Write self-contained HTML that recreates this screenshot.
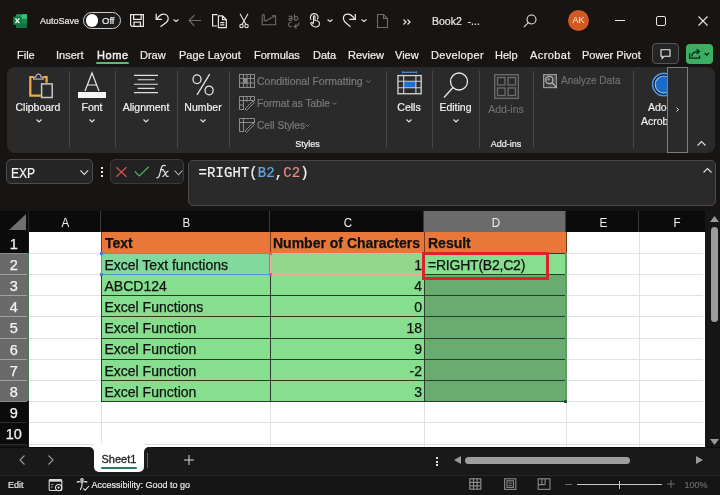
<!DOCTYPE html>
<html><head><meta charset="utf-8">
<style>
*{margin:0;padding:0;box-sizing:border-box}
body{will-change:transform}
html,body{width:720px;height:495px;overflow:hidden;background:#171412;font-family:"Liberation Sans",sans-serif;color:#fff}
.a{position:absolute}
.t{position:absolute;white-space:nowrap;line-height:1;-webkit-text-stroke-width:0.2px}
svg{position:absolute;overflow:visible}
.vl{position:absolute;width:1px;background:#474747}
.grp{position:absolute;-webkit-text-stroke-width:0.2px;font-size:10.5px;color:#f2f2f2;white-space:nowrap;line-height:1;text-align:center}
.dim{color:#7a7a7a}
.ch{position:absolute}
.ct{font-size:14px;color:#111;-webkit-text-stroke:0.25px #111}
.hd{-webkit-text-stroke-width:0}
</style></head><body>

<!-- ===== TITLE BAR ===== -->
<div id="title">
  <!-- Excel logo -->
  <svg style="left:13px;top:13.5px" width="15" height="14" viewBox="0 0 15 14">
    <rect x="3" y="0.3" width="11" height="13.4" rx="1" fill="#1e9e5e"/>
    <rect x="8.5" y="0.3" width="5.5" height="4.5" rx="0.8" fill="#33c481"/>
    <rect x="3" y="4.8" width="11" height="4.5" fill="#168a4e"/>
    <rect x="3" y="9.3" width="11" height="4.4" rx="1" fill="#15703f"/>
    <rect x="0.1" y="2.5" width="8.6" height="8.6" rx="1" fill="#117a42"/>
    <path d="M2.4 4.4 L6.4 9.2 M6.4 4.4 L2.4 9.2" stroke="#f4fff8" stroke-width="1.3"/>
  </svg>
  <div class="t" style="left:40px;top:17px;font-size:9px;color:#e8e8e8">AutoSave</div>
  <!-- toggle -->
  <div class="a" style="left:83px;top:12px;width:38px;height:17px;border:1.3px solid #cfcfcf;border-radius:9px;background:#1c1c1c"></div>
  <div class="a" style="left:85.5px;top:14px;width:12.5px;height:12.5px;border-radius:50%;background:#fff"></div>
  <div class="t" style="left:102px;top:15.8px;font-size:9.5px;color:#f0f0f0">Off</div>
  <!-- save -->
  <svg style="left:130px;top:14px" width="14" height="13" viewBox="0 0 14 13" fill="none" stroke="#e8e8e8" stroke-width="1.2">
    <path d="M0.6 0.6 H13.4 V12.4 H2 L0.6 11 Z"/>
    <path d="M3.6 0.6 V5.4 H11.2 V0.6"/>
    <path d="M4 12.4 V8.2 H10.4 V12.4"/>
  </svg>
  <!-- undo -->
  <svg style="left:150px;top:10px" width="20" height="20" viewBox="0 0 20 20" fill="none" stroke="#ececec" stroke-width="1.25">
    <path d="M6.2 3.8 V9.3 H11.8"/>
    <path d="M6.8 9 C9 5.5 11.5 4 13.8 4 C16.3 4 18.2 6 18.2 8.5 C18.2 10.2 17.5 11.3 16.5 12.3 L10.5 16.8"/>
  </svg>
  <svg style="left:173px;top:19px" width="6" height="3" viewBox="0 0 6 3" fill="none" stroke="#e0e0e0" stroke-width="1.2"><path d="M0.5 0.5 L3 2.5 L5.5 0.5"/></svg>
  <!-- back arrow -->
  <svg style="left:188px;top:14px" width="14" height="13" viewBox="0 0 14 13" fill="none" stroke="#6a6a6a" stroke-width="1.1">
    <path d="M13 6.5 H1 M6.5 1 L1 6.5 L6.5 12"/>
  </svg>
  <!-- copy -->
  <svg style="left:208px;top:10px" width="22" height="20" viewBox="0 0 22 20" fill="none" stroke="#e8e8e8" stroke-width="1.2">
    <path d="M9.5 4.6 H4.6 V16 H9"/>
    <path d="M10.4 5.8 H14.5 L18.3 9.6 V17.6 H10.4 Z M14.5 5.8 V9.6 H18.3"/>
    <path d="M12.3 12.6 H16.3 M12.3 14.8 H16.3"/>
  </svg>
  <!-- scissors -->
  <svg style="left:236px;top:10px" width="16" height="20" viewBox="0 0 16 20" fill="none" stroke="#e8e8e8" stroke-width="1.1">
    <path d="M4 3.7 L9.8 14.3 M12 3.7 L6.2 14.3"/>
    <circle cx="5.5" cy="16" r="1.7"/><circle cx="10.5" cy="16" r="1.7"/>
  </svg>
  <!-- sign icon (disabled) -->
  <svg style="left:258px;top:10px" width="20" height="18" viewBox="0 0 20 18" fill="none" stroke="#6e6e6e" stroke-width="1.1">
    <path d="M4.2 10 V14.7 H17.6 V5.8 H14"/>
    <path d="M7 11.2 L17.4 5.8"/>
    <path d="M4.5 11 C3.8 8 4 5 5.2 4.6 C6.2 4.3 6.5 6 6.2 8.5 C6 10 6.5 11 7.5 10.5"/>
  </svg>
  <!-- spelling icon (disabled) -->
  <svg style="left:286px;top:10px" width="16" height="20" viewBox="0 0 16 20" fill="none" stroke="#6e6e6e" stroke-width="1.1">
    <path d="M3 7 C3 5.8 6 5.8 6 7 V10.5 M6 8.5 C4.5 8.2 2.8 8.6 2.8 9.6 C2.8 10.8 5 10.8 6 9.6"/>
    <path d="M8.5 4.3 V10.5 M8.5 7.8 C9 6 12 6 12 8.2 C12 10.8 9 10.8 8.5 9"/>
    <path d="M5.5 12.5 C4 11.8 2.5 12.8 2.5 14.5 C2.5 16.5 4.5 17 5.5 16.3"/>
    <path d="M12.8 12.5 C13.5 15 11.5 16.5 8.5 16.5 M10.5 14.5 L8.3 16.5 L10.5 18.5"/>
  </svg>
  <!-- touch icon -->
  <svg style="left:305px;top:10px" width="20" height="20" viewBox="0 0 20 20" fill="none" stroke="#e8e8e8" stroke-width="1.1">
    <path d="M6.2 10 C4.5 8 5.5 3.6 9.3 3.6 C13 3.6 14 7.5 12.2 9.5"/>
    <path d="M8.5 13 V6.6 C8.5 5.6 10 5.6 10 6.6 V10.5 C12.5 10.5 14.5 11 14.5 13.5 C14.5 16 12.5 17 10.5 17 C8.5 17 7 15.5 5.8 13.5 C5.5 12.8 6.5 12.3 7.2 12.8 L8.5 14"/>
  </svg>
  <svg style="left:327px;top:19px" width="6" height="3" viewBox="0 0 6 3" fill="none" stroke="#e0e0e0" stroke-width="1.2"><path d="M0.5 0.5 L3 2.5 L5.5 0.5"/></svg>
  <!-- redo -->
  <svg style="left:338px;top:10px" width="20" height="20" viewBox="0 0 20 20" fill="none" stroke="#ececec" stroke-width="1.25">
    <path d="M17.3 4 V9.4 H11.25"/>
    <path d="M16.7 9 C14.5 5.5 12 4 9.6 4 C7.2 4 5.4 6 5.4 8.3 C5.4 10 6.3 11.2 7 12 L12.5 16.9"/>
  </svg>
  <svg style="left:361px;top:19px" width="6" height="3" viewBox="0 0 6 3" fill="none" stroke="#e0e0e0" stroke-width="1.2"><path d="M0.5 0.5 L3 2.5 L5.5 0.5"/></svg>
  <!-- doc (disabled) -->
  <svg style="left:377px;top:14px" width="11" height="14" viewBox="0 0 11 14" fill="none" stroke="#6e6e6e" stroke-width="1.1">
    <path d="M0.5 0.5 H6.5 L10.5 4.5 V13.5 H0.5 Z M6.5 0.5 V4.5 H10.5"/>
  </svg>
  <!-- >> -->
  <svg style="left:403px;top:19px" width="8" height="6" viewBox="0 0 8 6" fill="none" stroke="#e8e8e8" stroke-width="1.2">
    <path d="M0.5 0.5 L3 3 L0.5 5.5 M4.5 0.5 L7 3 L4.5 5.5"/>
  </svg>
  <div class="t" style="left:432px;top:16px;font-size:10.5px;color:#e8e8e8">Book2&nbsp;&nbsp;-...</div>
  <!-- search -->
  <svg style="left:523px;top:14px" width="14" height="14" viewBox="0 0 14 14" fill="none" stroke="#e6e6e6" stroke-width="1.1">
    <circle cx="8.5" cy="5.5" r="4.5"/><path d="M5.3 8.7 L0.8 13.2"/>
  </svg>
  <!-- avatar -->
  <div class="a" style="left:568px;top:10px;width:21px;height:21px;border-radius:50%;background:#d05a22"></div>
  <div class="t" style="left:568px;top:16px;width:21px;text-align:center;font-size:9px;color:#f8f0ea;-webkit-text-stroke-width:0">AK</div>
  <!-- window controls -->
  <div class="a" style="left:615px;top:19.7px;width:9.5px;height:1.4px;background:#e6e6e6"></div>
  <div class="a" style="left:656px;top:16px;width:9.5px;height:9.5px;border:1.2px solid #e6e6e6;border-radius:2px"></div>
  <svg style="left:698px;top:16px" width="10" height="10" viewBox="0 0 10 10" fill="none" stroke="#e6e6e6" stroke-width="1.1"><path d="M0.5 0.5 L9.5 9.5 M9.5 0.5 L0.5 9.5"/></svg>
</div>

<!-- ===== TABS ===== -->
<div id="tabs" style="font-size:11px;color:#f0f0f0">
  <div class="t" style="left:17px;top:50px">File</div>
  <div class="t" style="left:56px;top:50px">Insert</div>
  <div class="t" style="left:97px;top:50px;-webkit-text-stroke-width:0.45px;letter-spacing:0.6px">Home</div>
  <div class="a" style="left:96px;top:62px;width:33px;height:2px;background:#5dbb7a;border-radius:1px"></div>
  <div class="t" style="left:140px;top:50px">Draw</div>
  <div class="t" style="left:179px;top:50px">Page Layout</div>
  <div class="t" style="left:254px;top:50px">Formulas</div>
  <div class="t" style="left:313px;top:50px">Data</div>
  <div class="t" style="left:348px;top:50px">Review</div>
  <div class="t" style="left:395px;top:50px">View</div>
  <div class="t" style="left:431px;top:50px;letter-spacing:0.3px">Developer</div>
  <div class="t" style="left:495px;top:50px">Help</div>
  <div class="t" style="left:530px;top:50px;letter-spacing:0.4px">Acrobat</div>
  <div class="t" style="left:582px;top:50px">Power Pivot</div>
  <!-- comment btn -->
  <div class="a" style="left:652px;top:43px;width:27px;height:20.5px;border:1px solid #565656;border-radius:4px;background:#242424"></div>
  <svg style="left:660px;top:48.5px" width="11" height="10" viewBox="0 0 11 10" fill="none" stroke="#f0f0f0" stroke-width="1.1"><path d="M1 0.7 H10 V7.2 H4.2 L2.2 9.3 V7.2 H1 Z"/></svg>
  <!-- share btn -->
  <div class="a" style="left:685.5px;top:43.5px;width:27px;height:20px;border-radius:4px;background:#3daf63"></div>
  <svg style="left:686px;top:44px" width="27" height="20" viewBox="0 0 27 20" fill="none" stroke="#0e2415" stroke-width="1.3">
    <path d="M3.6 9.2 V14.2 H13.6 V11.6"/>
    <path d="M5.8 12.6 C5.8 9.2 8.3 7.6 12.6 7.6"/>
    <path d="M10.6 5.2 L13.4 7.6 L10.6 10"/>
    <path d="M18.6 9 L20.8 11 L23 9"/>
  </svg>
</div>

<!-- ===== RIBBON ===== -->
<div id="ribbon" class="a" style="left:7px;top:67px;width:708px;height:86px;background:#2a2a2a;border-radius:8px"></div>
<!-- dividers -->
<div class="vl" style="left:69px;top:71px;height:77px"></div>
<div class="vl" style="left:115px;top:71px;height:77px"></div>
<div class="vl" style="left:177px;top:71px;height:77px"></div>
<div class="vl" style="left:229px;top:71px;height:77px"></div>
<div class="vl" style="left:386px;top:71px;height:77px"></div>
<div class="vl" style="left:432px;top:71px;height:77px"></div>
<div class="vl" style="left:479px;top:71px;height:77px"></div>
<div class="vl" style="left:533px;top:71px;height:77px"></div>
<div class="vl" style="left:633px;top:71px;height:77px"></div>
<!-- clipboard icon -->
<svg style="left:24px;top:68px" width="34" height="34" viewBox="0 0 34 34" fill="none">
  <path d="M9.5 9 H6.3 V27.7 H16.8" stroke="#eeae42" stroke-width="2.2"/>
  <path d="M19.5 9 H22.6 V14.8" stroke="#eeae42" stroke-width="2.2"/>
  <path d="M9.6 11.2 V9.2 H11.8 C11.8 5.2 17 5.2 17 9.2 H19.2 V11.2 Z" stroke="#b4b4b4" stroke-width="1.2" fill="#2a2a2a"/>
  <rect x="17.6" y="15.9" width="10.6" height="13.6" stroke="#c8c8c8" stroke-width="1.5" fill="#2a2a2a"/>
</svg>
<div class="grp" style="left:7px;top:102.4px;width:62px">Clipboard</div>
<svg style="left:36px;top:118.5px" width="6" height="4" viewBox="0 0 6 4" fill="none" stroke="#e0e0e0" stroke-width="1.2"><path d="M0.5 0.5 L3 3 L5.5 0.5"/></svg>
<!-- font icon -->
<svg style="left:77px;top:72px" width="30" height="27" viewBox="0 0 30 27" fill="none">
  <path d="M8 19 L15 1 L22 19 M10.5 13 H19.5" stroke="#e8e8e8" stroke-width="1.2"/>
  <rect x="1" y="20" width="28" height="6" fill="#f5f5f5"/>
</svg>
<div class="grp" style="left:69px;top:102.4px;width:46px">Font</div>
<svg style="left:89px;top:118.5px" width="6" height="4" viewBox="0 0 6 4" fill="none" stroke="#e0e0e0" stroke-width="1.2"><path d="M0.5 0.5 L3 3 L5.5 0.5"/></svg>
<!-- alignment icon -->
<svg style="left:133px;top:74px" width="26" height="20" viewBox="0 0 26 20" fill="none" stroke="#e0e0e0" stroke-width="1.15">
  <path d="M1 1.4 H25 M4.6 5.75 H21.8 M1 10.2 H25 M4.6 14.4 H21.8 M1 18.6 H25"/>
</svg>
<div class="grp" style="left:115px;top:102.4px;width:62px">Alignment</div>
<svg style="left:143px;top:118.5px" width="6" height="4" viewBox="0 0 6 4" fill="none" stroke="#e0e0e0" stroke-width="1.2"><path d="M0.5 0.5 L3 3 L5.5 0.5"/></svg>
<!-- number icon -->
<svg style="left:192px;top:74px" width="24" height="22" viewBox="0 0 24 22" fill="none" stroke="#e8e8e8" stroke-width="1.25">
  <ellipse cx="5" cy="5.2" rx="4" ry="4.4"/><ellipse cx="17.1" cy="16.4" rx="4" ry="4.4"/><path d="M17.7 0.2 L5 20.8"/>
</svg>
<div class="grp" style="left:177px;top:102.4px;width:52px">Number</div>
<svg style="left:200px;top:118.5px" width="6" height="4" viewBox="0 0 6 4" fill="none" stroke="#e0e0e0" stroke-width="1.2"><path d="M0.5 0.5 L3 3 L5.5 0.5"/></svg>
<!-- styles -->
<svg style="left:239px;top:74px" width="16" height="14" viewBox="0 0 16 14" fill="none" stroke="#8a8a8a" stroke-width="1">
  <rect x="0.5" y="0.5" width="15" height="13"/><path d="M0.5 4.5 H15.5 M0.5 9 H15.5 M4.5 0.5 V13.5 M8 0.5 V13.5 M11.5 0.5 V13.5"/>
  <rect x="4.5" y="4.5" width="3.5" height="4.5" fill="#8a8a8a"/>
</svg>
<div class="t dim" style="left:257px;top:76px;font-size:10.5px">Conditional Formatting</div>
<svg style="left:366px;top:79.5px" width="5" height="3" viewBox="0 0 5 3" fill="none" stroke="#7a7a7a" stroke-width="1"><path d="M0.5 0.5 L2.5 2.5 L4.5 0.5"/></svg>
<svg style="left:239px;top:96px" width="16" height="14" viewBox="0 0 16 14" fill="none" stroke="#8a8a8a" stroke-width="1">
  <path d="M15.5 5 V0.5 H0.5 V13.5 H5 M0.5 4.5 H15.5 M4.5 0.5 V13.5 M8 0.5 V6 M11.5 0.5 V4.5 M0.5 9 H5"/>
  <path d="M6 13 L14 5 L15.5 6.5 L7.5 14.5 Z"/>
</svg>
<div class="t dim" style="left:257px;top:99.2px;font-size:10.2px">Format as Table</div>
<svg style="left:332px;top:101.5px" width="5" height="3" viewBox="0 0 5 3" fill="none" stroke="#7a7a7a" stroke-width="1"><path d="M0.5 0.5 L2.5 2.5 L4.5 0.5"/></svg>
<svg style="left:239px;top:118px" width="16" height="14" viewBox="0 0 16 14" fill="none" stroke="#8a8a8a" stroke-width="1">
  <path d="M15.5 5 V0.5 H0.5 V13.5 H5 M0.5 4.5 H15.5 M4.5 0.5 V13.5"/>
  <path d="M6 13 L14 5 L15.5 6.5 L7.5 14.5 Z"/>
</svg>
<div class="t dim" style="left:257px;top:121.4px;font-size:10.2px">Cell Styles</div>
<svg style="left:305px;top:123.5px" width="5" height="3" viewBox="0 0 5 3" fill="none" stroke="#7a7a7a" stroke-width="1"><path d="M0.5 0.5 L2.5 2.5 L4.5 0.5"/></svg>
<div class="grp" style="left:229px;top:140px;width:157px;font-size:9px">Styles</div>
<!-- cells icon -->
<svg style="left:397px;top:71px" width="26" height="24" viewBox="0 0 26 24" fill="none">
  <path d="M5.6 1.3 H19.4" stroke="#4a8fd6" stroke-width="1.2"/>
  <path d="M5.6 0.2 V2.4 M19.4 0.2 V2.4" stroke="#4a8fd6" stroke-width="1"/>
  <rect x="6.7" y="10.3" width="12.2" height="6.5" fill="#1d6fd0"/>
  <rect x="0.95" y="4.55" width="23.2" height="18.2" stroke="#d8d8d8" stroke-width="1.3"/>
  <path d="M0.95 10.3 H24.15 M0.95 16.8 H24.15 M6.7 4.55 V22.75 M18.9 4.55 V22.75" stroke="#cfcfcf" stroke-width="1.1"/>
</svg>
<div class="grp" style="left:386px;top:102.4px;width:46px">Cells</div>
<svg style="left:406px;top:118.5px" width="6" height="4" viewBox="0 0 6 4" fill="none" stroke="#e0e0e0" stroke-width="1.2"><path d="M0.5 0.5 L3 3 L5.5 0.5"/></svg>
<!-- editing icon -->
<svg style="left:443px;top:72px" width="26" height="27" viewBox="0 0 26 27" fill="none" stroke="#e8e8e8" stroke-width="1.3">
  <circle cx="16" cy="9.5" r="8.5"/><path d="M10 15.5 L1 25.5"/>
</svg>
<div class="grp" style="left:432px;top:102.4px;width:47px">Editing</div>
<svg style="left:452.5px;top:118.5px" width="6" height="4" viewBox="0 0 6 4" fill="none" stroke="#e0e0e0" stroke-width="1.2"><path d="M0.5 0.5 L3 3 L5.5 0.5"/></svg>
<!-- add-ins -->
<svg style="left:494px;top:74px" width="25" height="25" viewBox="0 0 25 25" fill="none" stroke="#6e6e6e" stroke-width="1.3">
  <rect x="0.7" y="0.7" width="23.6" height="23.6"/>
  <rect x="3.5" y="3.5" width="7.5" height="7.5"/><rect x="14" y="3.5" width="7.5" height="7.5"/>
  <rect x="3.5" y="14" width="7.5" height="7.5"/><rect x="14" y="14" width="7.5" height="7.5"/>
</svg>
<div class="grp dim" style="left:479px;top:104px;width:54px;color:#6e6e6e">Add-ins</div>
<div class="grp" style="left:479px;top:140px;width:54px;font-size:9px">Add-ins</div>
<!-- analyze data -->
<svg style="left:543px;top:74px" width="15" height="15" viewBox="0 0 15 15" fill="none">
  <rect x="0.6" y="0.6" width="12.8" height="13" fill="#4a4a4a" stroke="#9a9a9a" stroke-width="1.2"/>
  <path d="M2.5 13 V9.5 M4.5 13 V10.5 M10 13 V9 M12 13 V10" stroke="#2a2a2a" stroke-width="1.2"/>
  <circle cx="6.3" cy="6" r="3.6" fill="#3a3a3a" stroke="#b8b8b8" stroke-width="1.2"/>
  <circle cx="5.6" cy="5.3" r="1.4" fill="#8a8a8a"/>
  <path d="M8.8 8.5 L13.8 13.8" stroke="#b8b8b8" stroke-width="1.3"/>
</svg>
<div class="t dim" style="left:561px;top:76px;font-size:10px;color:#707070">Analyze Data</div>
<!-- adobe -->
<svg style="left:650px;top:71px" width="28" height="28" viewBox="0 0 28 28">
  <circle cx="13.8" cy="13.6" r="11.2" fill="#0b1626" stroke="#4d93dc" stroke-width="1.6"/>
  <circle cx="13.8" cy="13.6" r="8.6" fill="#1b6cc8" stroke="#8cc0f0" stroke-width="1.2"/>
</svg>
<div class="t" style="left:648px;top:102px;font-size:10.5px;color:#f0f0f0">Ado</div>
<div class="t" style="left:641px;top:116px;font-size:10.5px;color:#f0f0f0">Acrob</div>
<div class="a" style="left:667px;top:67px;width:21px;height:86px;border:1px solid #7e7e7e;background:#2a2a2a"></div>
<svg style="left:676px;top:107px" width="3" height="5" viewBox="0 0 3 5" fill="none" stroke="#e0e0e0" stroke-width="1"><path d="M0.5 0.5 L2.5 2.5 L0.5 4.5"/></svg>
<svg style="left:697px;top:141px" width="9" height="5" viewBox="0 0 9 5" fill="none" stroke="#e0e0e0" stroke-width="1.1"><path d="M0.5 4.5 L4.5 0.5 L8.5 4.5"/></svg>

<!-- ===== FORMULA BAR ===== -->
<div id="fbar">
<div class="a" style="left:6px;top:159px;width:87px;height:25px;border:1px solid #4c4c4c;border-radius:5px;background:#262626"></div>
<div class="t" style="left:11px;top:165.5px;font-size:14px;color:#f5f5f5;transform:scaleX(0.86);transform-origin:left top">EXP</div>
<svg style="left:80px;top:169.8px" width="9" height="5" viewBox="0 0 9 5" fill="none" stroke="#e0e0e0" stroke-width="1.1"><path d="M0.4 0.4 L4.3 4.4 L8.2 0.4"/></svg>
<div class="a" style="left:101px;top:167px;width:2px;height:2px;background:#e8e8e8"></div>
<div class="a" style="left:101px;top:171px;width:2px;height:2px;background:#e8e8e8"></div>
<div class="a" style="left:101px;top:175px;width:2px;height:2px;background:#e8e8e8"></div>
<div class="a" style="left:110px;top:159px;width:74px;height:25px;border:1px solid #3a3a3a;border-radius:5px;background:#222"></div>
<svg style="left:116px;top:167px" width="11" height="10" viewBox="0 0 11 10" fill="none" stroke="#d65350" stroke-width="1.2"><path d="M0.3 0.2 L10.5 9.8 M10.5 0.2 L0.3 9.8"/></svg>
<svg style="left:134px;top:166px" width="15" height="11" viewBox="0 0 15 11" fill="none" stroke="#4bb36b" stroke-width="1.2"><path d="M0.8 5.5 L5.3 10 L14.8 0.8"/></svg>
<svg style="left:150px;top:160px" width="22" height="22" viewBox="0 0 22 22" fill="none" stroke="#e6e6e6" stroke-width="1.15">
  <path d="M6.2 17.6 C7.5 18.5 8.8 17.5 9.5 15 L11.5 7.5 C12 5.5 13.5 5 15.8 5.8"/>
  <path d="M10.2 9.6 H13.8"/>
  <path d="M12.6 11.2 C13.8 10.6 14.5 11 15 12.5 L16.2 15.5 C16.6 16.5 17.5 16.8 18.5 16"/>
  <path d="M18.6 11 C17.5 11 16.5 12.5 15.5 13.5 L13.8 15.5 C13.2 16.4 12.6 16.6 12.2 16.2"/>
</svg>
<svg style="left:173.5px;top:169.5px" width="9" height="6" viewBox="0 0 9 6" fill="none" stroke="#bdbdbd" stroke-width="1.1"><path d="M0.5 0.5 L4.5 4.8 L8.5 0.5"/></svg>
<div class="a" style="left:188px;top:160px;width:527.5px;height:46px;border:1px solid #4a4a4a;border-radius:5px;background:#2a2a2a"></div>
<div class="t" style="left:198.5px;top:166px;letter-spacing:0.07px;font-family:'Liberation Mono',monospace;font-size:14px;color:#f2f2f2">=RIGHT(<span style="color:#65a9e8">B2</span>,<span style="color:#e98a86">C2</span>)</div>
<svg style="left:703px;top:168px" width="9" height="5" viewBox="0 0 9 5" fill="none" stroke="#e0e0e0" stroke-width="1.1"><path d="M0.5 4.5 L4.5 0.5 L8.5 4.5"/></svg>
</div>

<!-- ===== GRID ===== -->
<div id="grid">
<div class="a" style="left:0;top:211px;width:720px;height:236px;background:#161616"></div>
<div class="a" style="left:29px;top:232px;width:676px;height:215px;background:#fff"></div>
<div class="a" style="left:0;top:211px;width:705px;height:21px;background:#0b0b0b"></div>
<div class="a" style="left:424px;top:211px;width:142px;height:21px;background:#6b6b6b"></div>
<div class="a" style="left:100px;top:211px;width:1px;height:21px;background:#3a3a3a"></div>
<div class="a" style="left:269px;top:211px;width:1px;height:21px;background:#3a3a3a"></div>
<div class="a" style="left:423px;top:211px;width:1px;height:21px;background:#3a3a3a"></div>
<div class="a" style="left:565px;top:211px;width:1px;height:21px;background:#3a3a3a"></div>
<div class="a" style="left:638px;top:211px;width:1px;height:21px;background:#3a3a3a"></div>
<div class="a" style="left:28px;top:211px;width:1px;height:21px;background:#2a2a2a"></div>
<svg style="left:9px;top:214px" width="17" height="16" viewBox="0 0 17 16"><path d="M17 0 V16 H0 Z" fill="#6f6f6f"/></svg>
<div class="t hd" style="left:28.8px;top:215.6px;width:73px;text-align:center;font-size:13.5px;color:#f0f0f0;transform:scaleX(0.86)">A</div>
<div class="t hd" style="left:101.8px;top:215.6px;width:169px;text-align:center;font-size:13.5px;color:#f0f0f0;transform:scaleX(0.86)">B</div>
<div class="t hd" style="left:270.8px;top:215.6px;width:154px;text-align:center;font-size:13.5px;color:#f0f0f0;transform:scaleX(0.86)">C</div>
<div class="t hd" style="left:424.8px;top:215.6px;width:142px;text-align:center;font-size:13.5px;color:#f0f0f0;transform:scaleX(0.86)">D</div>
<div class="t hd" style="left:566.8px;top:215.6px;width:73px;text-align:center;font-size:13.5px;color:#f0f0f0;transform:scaleX(0.86)">E</div>
<div class="t hd" style="left:639.8px;top:215.6px;width:74px;text-align:center;font-size:13.5px;color:#f0f0f0;transform:scaleX(0.86)">F</div>
<div class="a" style="left:0;top:232px;width:28px;height:21px;background:#0b0b0b"></div>
<div class="a" style="left:0;top:253px;width:28px;height:21px;background:#6a6a6a"></div>
<div class="a" style="left:0;top:274px;width:28px;height:21px;background:#6a6a6a"></div>
<div class="a" style="left:0;top:295px;width:28px;height:21px;background:#6a6a6a"></div>
<div class="a" style="left:0;top:316px;width:28px;height:22px;background:#6a6a6a"></div>
<div class="a" style="left:0;top:338px;width:28px;height:21px;background:#6a6a6a"></div>
<div class="a" style="left:0;top:359px;width:28px;height:21px;background:#6a6a6a"></div>
<div class="a" style="left:0;top:380px;width:28px;height:21px;background:#6a6a6a"></div>
<div class="a" style="left:0;top:401px;width:28px;height:21px;background:#0b0b0b"></div>
<div class="a" style="left:0;top:422px;width:28px;height:22px;background:#0b0b0b"></div>
<div class="a" style="left:0;top:253px;width:27px;height:1px;background:#8a8a8a"></div>
<div class="a" style="left:0;top:274px;width:27px;height:1px;background:#a0a0a0"></div>
<div class="a" style="left:0;top:295px;width:27px;height:1px;background:#a0a0a0"></div>
<div class="a" style="left:0;top:316px;width:27px;height:1px;background:#a0a0a0"></div>
<div class="a" style="left:0;top:338px;width:27px;height:1px;background:#a0a0a0"></div>
<div class="a" style="left:0;top:359px;width:27px;height:1px;background:#a0a0a0"></div>
<div class="a" style="left:0;top:380px;width:27px;height:1px;background:#a0a0a0"></div>
<div class="a" style="left:0;top:401px;width:27px;height:1px;background:#8a8a8a"></div>
<div class="a" style="left:0;top:422px;width:27px;height:1px;background:#2e2e2e"></div>
<div class="a" style="left:0;top:444px;width:27px;height:1px;background:#2e2e2e"></div>
<div class="t hd" style="left:0;top:236.6px;width:27.5px;text-align:center;font-size:14.5px;color:#f4f4f4;-webkit-text-stroke-width:0.25px">1</div>
<div class="t hd" style="left:0;top:257.8px;width:27.5px;text-align:center;font-size:14.5px;color:#f4f4f4;-webkit-text-stroke-width:0.25px">2</div>
<div class="t hd" style="left:0;top:279.0px;width:27.5px;text-align:center;font-size:14.5px;color:#f4f4f4;-webkit-text-stroke-width:0.25px">3</div>
<div class="t hd" style="left:0;top:300.2px;width:27.5px;text-align:center;font-size:14.5px;color:#f4f4f4;-webkit-text-stroke-width:0.25px">4</div>
<div class="t hd" style="left:0;top:321.4px;width:27.5px;text-align:center;font-size:14.5px;color:#f4f4f4;-webkit-text-stroke-width:0.25px">5</div>
<div class="t hd" style="left:0;top:342.6px;width:27.5px;text-align:center;font-size:14.5px;color:#f4f4f4;-webkit-text-stroke-width:0.25px">6</div>
<div class="t hd" style="left:0;top:363.8px;width:27.5px;text-align:center;font-size:14.5px;color:#f4f4f4;-webkit-text-stroke-width:0.25px">7</div>
<div class="t hd" style="left:0;top:385.0px;width:27.5px;text-align:center;font-size:14.5px;color:#f4f4f4;-webkit-text-stroke-width:0.25px">8</div>
<div class="t hd" style="left:0;top:406.2px;width:27.5px;text-align:center;font-size:14.5px;color:#f4f4f4;-webkit-text-stroke-width:0.25px">9</div>
<div class="t hd" style="left:0;top:427.4px;width:27.5px;text-align:center;font-size:14.5px;color:#f4f4f4;-webkit-text-stroke-width:0.25px">10</div>
<div class="a" style="left:28px;top:253px;width:1px;height:148px;background:#3f7f55"></div>
<div class="a" style="left:29px;top:253px;width:674px;height:1px;background:#e1e1e1"></div>
<div class="a" style="left:29px;top:274px;width:674px;height:1px;background:#e1e1e1"></div>
<div class="a" style="left:29px;top:295px;width:674px;height:1px;background:#e1e1e1"></div>
<div class="a" style="left:29px;top:316px;width:674px;height:1px;background:#e1e1e1"></div>
<div class="a" style="left:29px;top:338px;width:674px;height:1px;background:#e1e1e1"></div>
<div class="a" style="left:29px;top:359px;width:674px;height:1px;background:#e1e1e1"></div>
<div class="a" style="left:29px;top:380px;width:674px;height:1px;background:#e1e1e1"></div>
<div class="a" style="left:29px;top:401px;width:674px;height:1px;background:#e1e1e1"></div>
<div class="a" style="left:29px;top:422px;width:674px;height:1px;background:#e1e1e1"></div>
<div class="a" style="left:29px;top:444px;width:674px;height:1px;background:#e1e1e1"></div>
<div class="a" style="left:101px;top:232px;width:1px;height:215px;background:#e1e1e1"></div>
<div class="a" style="left:270px;top:232px;width:1px;height:215px;background:#e1e1e1"></div>
<div class="a" style="left:424px;top:232px;width:1px;height:215px;background:#e1e1e1"></div>
<div class="a" style="left:566px;top:232px;width:1px;height:215px;background:#e1e1e1"></div>
<div class="a" style="left:639px;top:232px;width:1px;height:215px;background:#e1e1e1"></div>
<div class="a" style="left:101px;top:232px;width:465px;height:21px;background:#ea773a"></div>
<div class="a" style="left:101px;top:253px;width:323px;height:148px;background:#86de8f"></div>
<div class="a" style="left:424px;top:253px;width:142px;height:21px;background:#86de8f"></div>
<div class="a" style="left:424px;top:274px;width:142px;height:127px;background:#68ad6f"></div>
<div class="a" style="left:101px;top:253px;width:169px;height:21px;background:#80d99d"></div>
<div class="a" style="left:270px;top:253px;width:154px;height:21px;background:#93d78d"></div>
<div class="a" style="left:101px;top:253px;width:465px;height:1px;background:#2b3b2c"></div>
<div class="a" style="left:101px;top:274px;width:465px;height:1px;background:#2b3b2c"></div>
<div class="a" style="left:101px;top:295px;width:465px;height:1px;background:#2b3b2c"></div>
<div class="a" style="left:101px;top:316px;width:465px;height:1px;background:#2b3b2c"></div>
<div class="a" style="left:101px;top:338px;width:465px;height:1px;background:#2b3b2c"></div>
<div class="a" style="left:101px;top:359px;width:465px;height:1px;background:#2b3b2c"></div>
<div class="a" style="left:101px;top:380px;width:465px;height:1px;background:#2b3b2c"></div>
<div class="a" style="left:101px;top:401px;width:465px;height:1px;background:#2b3b2c"></div>
<div class="a" style="left:101px;top:253px;width:1px;height:149px;background:#2b3b2c"></div>
<div class="a" style="left:101px;top:232px;width:1px;height:21px;background:#7a3a18"></div>
<div class="a" style="left:270px;top:253px;width:1px;height:149px;background:#2b3b2c"></div>
<div class="a" style="left:270px;top:232px;width:1px;height:21px;background:#7a3a18"></div>
<div class="a" style="left:424px;top:253px;width:1px;height:149px;background:#2b3b2c"></div>
<div class="a" style="left:424px;top:232px;width:1px;height:21px;background:#7a3a18"></div>
<div class="a" style="left:566px;top:253px;width:1px;height:149px;background:#2b3b2c"></div>
<div class="a" style="left:566px;top:232px;width:1px;height:21px;background:#7a3a18"></div>
<div class="a" style="left:565px;top:253px;width:2px;height:148px;background:#5f9a68"></div>
<div class="a" style="left:101px;top:253px;width:169px;height:22px;border:1px solid #5b8fd6"></div>
<div class="a" style="left:100px;top:252px;width:3px;height:3px;background:#4a7fd0"></div>
<div class="a" style="left:100px;top:273px;width:3px;height:3px;background:#4a7fd0"></div>
<div class="a" style="left:270px;top:253px;width:154px;height:22px;border:1px solid #f0a8a8"></div>
<div class="a" style="left:269px;top:252px;width:3px;height:3px;background:#d9607a"></div>
<div class="a" style="left:269px;top:273px;width:3px;height:3px;background:#d9607a"></div>
<div class="a" style="left:564px;top:400px;width:3px;height:3px;background:#1f5c32"></div>
<div class="t ct" style="left:105px;top:236.3px;font-weight:700;">Text</div>
<div class="t ct" style="left:273px;top:236.3px;font-weight:700;">Number of Characters</div>
<div class="t ct" style="left:428px;top:236.3px;font-weight:700;">Result</div>
<div class="t ct" style="left:104.5px;top:257.5px;">Excel Text functions</div>
<div class="t ct" style="left:272px;top:257.5px;width:150px;text-align:right;">1</div>
<div class="t ct" style="left:104.5px;top:278.7px;">ABCD124</div>
<div class="t ct" style="left:272px;top:278.7px;width:150px;text-align:right;">4</div>
<div class="t ct" style="left:104.5px;top:299.9px;">Excel Functions</div>
<div class="t ct" style="left:272px;top:299.9px;width:150px;text-align:right;">0</div>
<div class="t ct" style="left:104.5px;top:321.1px;">Excel Function</div>
<div class="t ct" style="left:272px;top:321.1px;width:150px;text-align:right;">18</div>
<div class="t ct" style="left:104.5px;top:342.3px;">Excel Function</div>
<div class="t ct" style="left:272px;top:342.3px;width:150px;text-align:right;">9</div>
<div class="t ct" style="left:104.5px;top:363.5px;">Excel Function</div>
<div class="t ct" style="left:272px;top:363.5px;width:150px;text-align:right;">-2</div>
<div class="t ct" style="left:104.5px;top:384.7px;">Excel Function</div>
<div class="t ct" style="left:272px;top:384.7px;width:150px;text-align:right;">3</div>
<div class="t ct" style="left:428px;letter-spacing:-0.22px;top:257.5px;">=RIGHT(B2,C2)</div>
<div class="a" style="left:422px;top:252px;width:127px;height:28px;border:3px solid #d8252b"></div>
<div class="a" style="left:705px;top:211px;width:15px;height:236px;background:#161616"></div>
<svg style="left:710px;top:216px" width="9" height="6" viewBox="0 0 9 6"><path d="M4.5 0 L9 6 H0 Z" fill="#9a9a9a"/></svg>
<div class="a" style="left:711px;top:227px;width:7px;height:95px;border-radius:3.5px;background:#9c9c9c"></div>
<svg style="left:710px;top:439px" width="9" height="6" viewBox="0 0 9 6"><path d="M0 0 H9 L4.5 6 Z" fill="#9a9a9a"/></svg>
</div>

<!-- ===== TAB BAR / STATUS ===== -->
<div id="bottom">
<div class="a" style="left:0;top:447px;width:720px;height:28px;background:#191919"></div>
<div class="a" style="left:0;top:447px;width:720px;height:1px;background:#0c0c0c"></div>
<!-- sheet tab -->
<div class="a" style="left:94px;top:444px;width:50px;height:28px;background:#fff;border-radius:0 0 5px 5px"></div>
<div class="a" style="left:89px;top:447px;width:5px;height:5px;background:#fff"></div>
<div class="a" style="left:84px;top:447px;width:10px;height:10px;background:#191919;border-radius:0 5px 0 0"></div>
<div class="a" style="left:144px;top:447px;width:5px;height:5px;background:#fff"></div>
<div class="a" style="left:144px;top:447px;width:10px;height:10px;background:#191919;border-radius:5px 0 0 0"></div>
<div class="t" style="left:101.5px;top:454px;font-size:11px;color:#222;-webkit-text-stroke-width:0.3px">Sheet1</div>
<div class="a" style="left:101px;top:467px;width:36px;height:2px;background:#2a7a55;border-radius:1px"></div>
<svg style="left:19px;top:455px" width="6" height="10" viewBox="0 0 6 10" fill="none" stroke="#9a9a9a" stroke-width="1.1"><path d="M5.5 0.5 L1 5 L5.5 9.5"/></svg>
<svg style="left:47.5px;top:455px" width="6" height="10" viewBox="0 0 6 10" fill="none" stroke="#9a9a9a" stroke-width="1.1"><path d="M0.5 0.5 L5 5 L0.5 9.5"/></svg>
<div class="a" style="left:147px;top:453px;width:1px;height:15px;background:#5a5a5a"></div>
<svg style="left:183.5px;top:455px" width="10" height="10" viewBox="0 0 10 10" fill="none" stroke="#d8d8d8" stroke-width="1"><path d="M5 0 V10 M0 5 H10"/></svg>
<div class="a" style="left:436px;top:457px;width:2px;height:2px;background:#e0e0e0"></div>
<div class="a" style="left:436px;top:460.5px;width:2px;height:2px;background:#e0e0e0"></div>
<div class="a" style="left:436px;top:464px;width:2px;height:2px;background:#e0e0e0"></div>
<svg style="left:454px;top:456px" width="7" height="8" viewBox="0 0 7 8"><path d="M0 4 L7 0 V8 Z" fill="#9a9a9a"/></svg>
<div class="a" style="left:465px;top:457px;width:165px;height:7px;border-radius:3.5px;background:#9e9e9e"></div>
<svg style="left:696px;top:456px" width="7" height="8" viewBox="0 0 7 8"><path d="M7 4 L0 0 V8 Z" fill="#9a9a9a"/></svg>
<!-- status bar -->
<div class="a" style="left:0;top:475px;width:720px;height:20px;background:#151515"></div>
<div class="a" style="left:0;top:475px;width:720px;height:1px;background:#262626"></div>
<div class="t" style="left:8px;top:481px;font-size:9px;color:#e8e8e8">Edit</div>
<svg style="left:48px;top:478px" width="16" height="14" viewBox="0 0 16 14" fill="none">
  <rect x="1.2" y="1.5" width="12.6" height="11" rx="1" stroke="#d8d8d8" stroke-width="1.1"/>
  <rect x="1.2" y="1.5" width="12.6" height="2.2" fill="#d8d8d8"/>
  <path d="M3 6.5 H5.5 M3 9 H5" stroke="#9a9a9a" stroke-width="1"/>
  <circle cx="10.6" cy="9.6" r="3.1" fill="#141414" stroke="#ececec" stroke-width="1.1"/>
  <circle cx="10.6" cy="9.6" r="1.1" fill="#ececec"/>
</svg>
<svg style="left:75px;top:477px" width="16" height="16" viewBox="0 0 16 16" fill="none" stroke="#ececec" stroke-width="1.1">
  <circle cx="7" cy="2.8" r="1.2"/>
  <path d="M1.8 5.3 C3 3.8 4.5 5 7 5 C9.5 5 11 3.8 12.2 5.3"/>
  <path d="M7 5 V8.5 C7 10.5 5.5 11 5.5 13"/>
  <path d="M8.5 11.5 L10.2 13.3 L14 9"/>
</svg>
<div class="t" style="left:91.5px;top:481px;font-size:9px;color:#e8e8e8">Accessibility: Good to go</div>
<svg style="left:469px;top:478px" width="13" height="12" viewBox="0 0 13 12" fill="none" stroke="#8a8a8a" stroke-width="1.2">
  <rect x="0.8" y="0.8" width="11" height="10.4"/><path d="M4.5 0.8 V11.2 M8.1 0.8 V11.2 M0.8 4.3 H11.8 M0.8 7.8 H11.8"/>
</svg>
<svg style="left:504px;top:478px" width="13" height="12" viewBox="0 0 13 12" fill="none" stroke="#8a8a8a" stroke-width="1.1">
  <rect x="0.6" y="0.8" width="11.2" height="10.6"/><rect x="3" y="2.8" width="6.4" height="6.6"/><path d="M4.6 5 H7.8 M4.6 7.2 H7.8"/>
</svg>
<svg style="left:537px;top:478px" width="14" height="12" viewBox="0 0 14 12" fill="none" stroke="#8a8a8a" stroke-width="1.1">
  <rect x="1.2" y="0.8" width="11.8" height="10.6"/><path d="M4.9 0.8 V6.6 M8.1 0.8 V6.6 M1.2 6.6 H8.1"/>
</svg>
<div class="a" style="left:565px;top:484px;width:7px;height:1px;background:#6a6a6a"></div>
<div class="a" style="left:577px;top:484px;width:85px;height:1px;background:#c8c8c8"></div>
<div class="a" style="left:619px;top:480.5px;width:1px;height:8px;background:#c8c8c8"></div>
<svg style="left:667px;top:480px" width="8" height="8" viewBox="0 0 8 8" fill="none" stroke="#6a6a6a" stroke-width="1"><path d="M4 0 V8 M0 4 H8"/></svg>
<div class="t" style="left:684.5px;top:481px;font-size:9px;color:#6a6a6a">100%</div>
</div>

</body></html>
